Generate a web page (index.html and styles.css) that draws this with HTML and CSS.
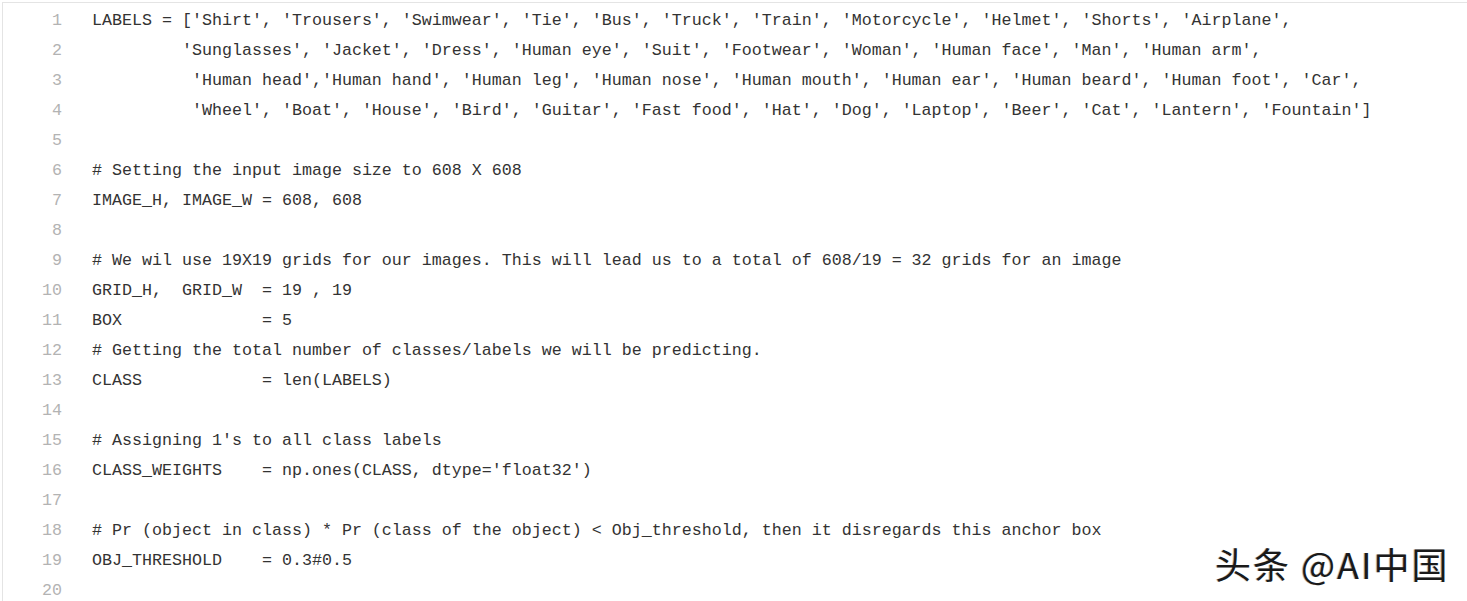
FILE: index.html
```html
<!DOCTYPE html>
<html lang="en">
<head>
<meta charset="utf-8">
<title>Code</title>
<link rel="stylesheet" href="styles.css">
</head>
<body>
<div class="code-block">
<div class="row"><span class="num">1</span><span class="code">LABELS = ['Shirt', 'Trousers', 'Swimwear', 'Tie', 'Bus', 'Truck', 'Train', 'Motorcycle', 'Helmet', 'Shorts', 'Airplane',</span></div>
<div class="row"><span class="num">2</span><span class="code">         'Sunglasses', 'Jacket', 'Dress', 'Human eye', 'Suit', 'Footwear', 'Woman', 'Human face', 'Man', 'Human arm',</span></div>
<div class="row"><span class="num">3</span><span class="code">          'Human head','Human hand', 'Human leg', 'Human nose', 'Human mouth', 'Human ear', 'Human beard', 'Human foot', 'Car',</span></div>
<div class="row"><span class="num">4</span><span class="code">          'Wheel', 'Boat', 'House', 'Bird', 'Guitar', 'Fast food', 'Hat', 'Dog', 'Laptop', 'Beer', 'Cat', 'Lantern', 'Fountain']</span></div>
<div class="row"><span class="num">5</span><span class="code"></span></div>
<div class="row"><span class="num">6</span><span class="code"># Setting the input image size to 608 X 608</span></div>
<div class="row"><span class="num">7</span><span class="code">IMAGE_H, IMAGE_W = 608, 608</span></div>
<div class="row"><span class="num">8</span><span class="code"></span></div>
<div class="row"><span class="num">9</span><span class="code"># We wil use 19X19 grids for our images. This will lead us to a total of 608/19 = 32 grids for an image</span></div>
<div class="row"><span class="num">10</span><span class="code">GRID_H,  GRID_W  = 19 , 19</span></div>
<div class="row"><span class="num">11</span><span class="code">BOX              = 5</span></div>
<div class="row"><span class="num">12</span><span class="code"># Getting the total number of classes/labels we will be predicting.</span></div>
<div class="row"><span class="num">13</span><span class="code">CLASS            = len(LABELS)</span></div>
<div class="row"><span class="num">14</span><span class="code"></span></div>
<div class="row"><span class="num">15</span><span class="code"># Assigning 1's to all class labels</span></div>
<div class="row"><span class="num">16</span><span class="code">CLASS_WEIGHTS    = np.ones(CLASS, dtype='float32')</span></div>
<div class="row"><span class="num">17</span><span class="code"></span></div>
<div class="row"><span class="num">18</span><span class="code"># Pr (object in class) * Pr (class of the object) &lt; Obj_threshold, then it disregards this anchor box</span></div>
<div class="row"><span class="num">19</span><span class="code">OBJ_THRESHOLD    = 0.3#0.5</span></div>
<div class="row"><span class="num">20</span><span class="code"></span></div>
</div>
<div class="watermark">头条 @AI中国</div>
</body>
</html>
```

FILE: styles.css
```css
html, body {
  margin: 0;
  padding: 0;
  background: #ffffff;
  overflow: hidden;
}

body {
  width: 1467px;
  height: 601px;
  position: relative;
}

.code-block {
  margin: 2px 0 0 2px;
  border-top: 1px solid #e4e4e4;
  border-left: 1px solid #e4e4e4;
  padding-top: 3px;
  font-family: "Liberation Mono", "DejaVu Sans Mono", monospace;
  font-size: 16.67px;
  color: #333333;
}

.row {
  display: flex;
  height: 30px;
  line-height: 30px;
}

.num {
  width: 59px;
  flex: none;
  text-align: right;
  color: #b3b3b3;
}

.code {
  margin-left: 30px;
  white-space: pre;
}

.watermark {
  position: absolute;
  left: 1215px;
  top: 541px;
  font-family: "Noto Sans CJK SC", "Liberation Sans", sans-serif;
  font-size: 36px;
  line-height: 44px;
  color: #1a1a1a;
  letter-spacing: 2px;
  text-shadow: 1px 1px 0 #ffffff, -1px 0 0 #bbbbbb;
}
```
